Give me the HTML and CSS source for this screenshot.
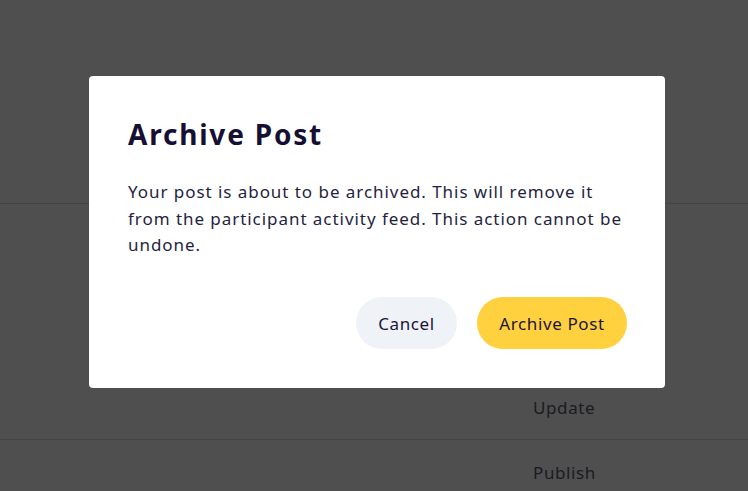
FILE: index.html
```html
<!DOCTYPE html>
<html lang="en">
<head>
    <meta charset="UTF-8">
    <meta name="viewport" content="width=device-width, initial-scale=1.0">
    <title>Archive Post</title>
    <link rel="stylesheet" href="styles.css">
</head>
<body>

    <div class="page">
        <div class="page-head"></div>
        <div class="page-row">
            <span class="row-action">Update</span>
        </div>
        <div class="page-row">
            <span class="row-action">Publish</span>
        </div>
    </div>

    <div class="overlay">
        <div class="modal">
            <h1 class="modal-title">Archive Post</h1>
            <p class="modal-text">Your post is about to be archived. This will remove it from the participant activity feed. This action cannot be undone.</p>
            <div class="modal-actions">
                <button class="btn btn-cancel">Cancel</button>
                <button class="btn btn-confirm">Archive Post</button>
            </div>
        </div>
    </div>

</body>
</html>
```

FILE: styles.css
```css
/* reset */
* {
    margin: 0;
    padding: 0;
    box-sizing: border-box;
}

body {
    background-color: #4f4f4f;
    font-family: "Noto Sans", Arial, sans-serif;
    width: 100vw;
    height: 100vh;
    overflow: hidden;
}

/* page behind the dialog */
.page-head {
    height: 204px;
    border-bottom: 1px solid #444444;
}

.page-row {
    height: 236px;
    padding-left: 533px;
    padding-top: 192px;
    border-bottom: 1px solid #444444;
}

.page-row + .page-row {
    height: auto;
    padding-top: 21px;
    border-bottom: none;
}

.row-action {
    font-size: 17px;
    color: #1b1a22;
    letter-spacing: 0.6px;
}

/* dialog */
.overlay {
    position: absolute;
    top: 0;
    left: 0;
    width: 100%;
    height: 100%;
}

.modal {
    margin: 76px 0 0 89px;
    width: 576px;
    height: 312px;
    background-color: white;
    border-radius: 4px;
    padding: 36px 38px 39px 39px;
    display: flex;
    flex-direction: column;
}

.modal-title {
    font-size: 28px;
    font-weight: bold;
    letter-spacing: 1.8px;
    color: #160f33;
    line-height: 44px;
}

.modal-text {
    margin-top: 23px;
    font-size: 17px;
    letter-spacing: 0.95px;
    line-height: 26.5px;
    color: #251f3f;
}

.modal-actions {
    margin-top: auto;
    display: flex;
    justify-content: flex-end;
    gap: 20px;
}

.btn {
    height: 52px;
    border: none;
    border-radius: 26px;
    font-family: inherit;
    font-size: 17px;
    letter-spacing: 0.6px;
    color: #1c1538;
    cursor: pointer;
}

.btn-cancel {
    width: 101px;
    background-color: #eff2f7;
}

.btn-confirm {
    width: 150px;
    background-color: #ffd13f;
}
```
